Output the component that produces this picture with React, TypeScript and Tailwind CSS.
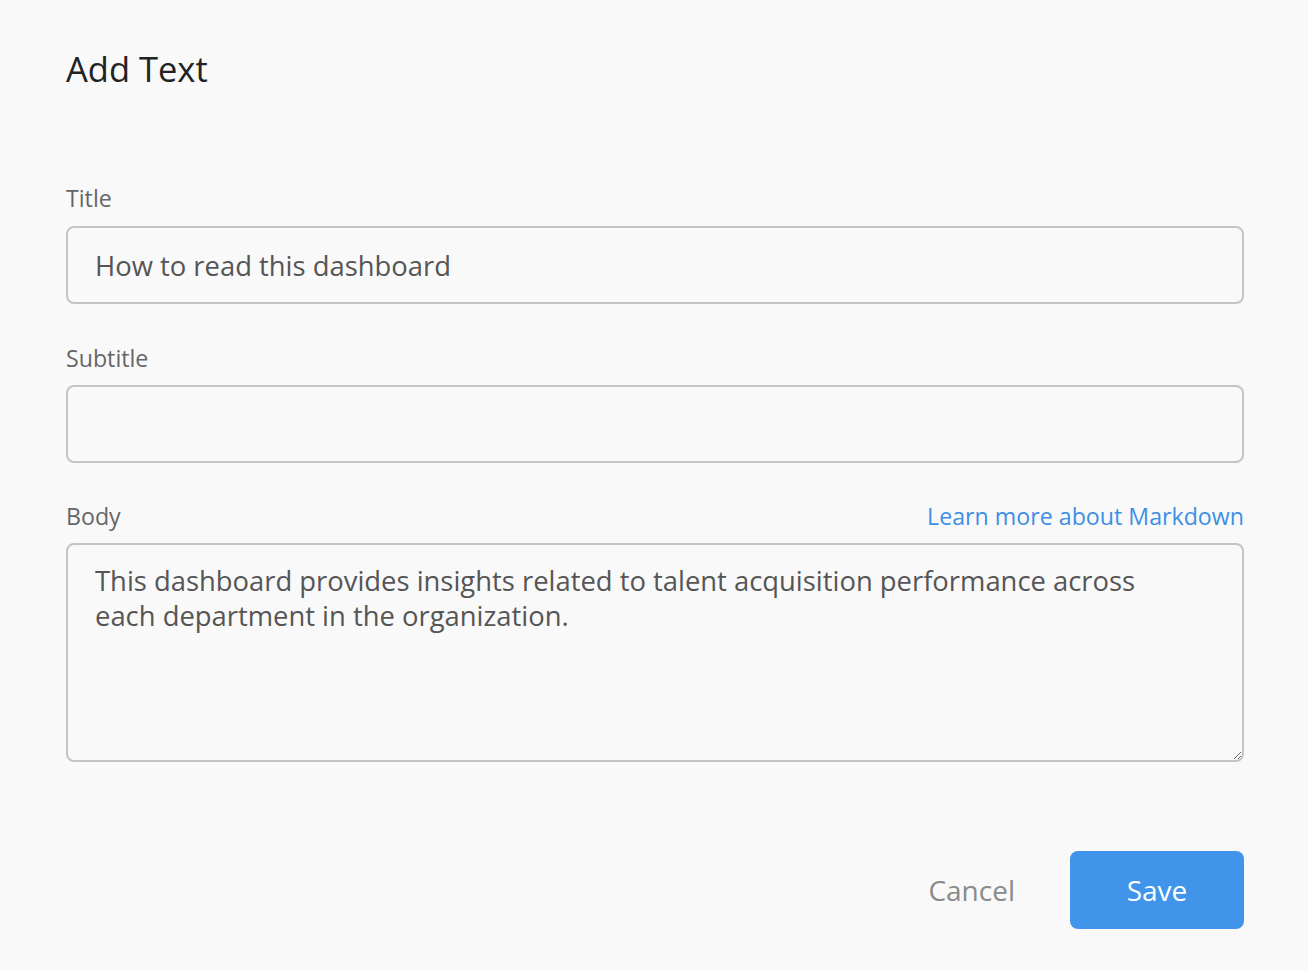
import { useState } from 'react';

const font = { fontFamily: '"Open Sans", "Noto Sans", sans-serif' };

export default function App() {
  const [title, setTitle] = useState('How to read this dashboard');
  const [subtitle, setSubtitle] = useState('');
  const [body, setBody] = useState(
    'This dashboard provides insights related to talent acquisition performance across each department in the organization.'
  );

  return (
    <div className="min-h-[970px] w-full bg-[#f9f9f9] pl-[66px] pr-[64px] pt-[42px]" style={font}>
      <h1 className="text-[34.5px] leading-[54px] text-[#222]">Add Text</h1>

      <div className="mt-[86px] flex flex-col">
        <label className="text-[23.2px] leading-[32px] text-[#666]">Title</label>
        <input
          value={title}
          onChange={e => setTitle(e.target.value)}
          className="mt-[12px] h-[78px] w-full rounded-[8px] border-2 border-[#c4c4c4] bg-[#f9f9f9] px-[27px] text-[27.4px] text-[#555] outline-none"
        />

        <label className="mt-[38px] text-[23.2px] leading-[32px] text-[#666]">Subtitle</label>
        <input
          value={subtitle}
          onChange={e => setSubtitle(e.target.value)}
          className="mt-[11px] h-[78px] w-full rounded-[8px] border-2 border-[#c4c4c4] bg-[#f9f9f9] px-[27px] text-[27.4px] text-[#555] outline-none"
        />

        <div className="mt-[37px] flex items-center justify-between">
          <label className="text-[23.2px] leading-[32px] text-[#666]">Body</label>
          <a href="#" className="text-[23.2px] leading-[32px] text-[#3d8fe6]">
            Learn more about Markdown
          </a>
        </div>
        <textarea
          value={body}
          onChange={e => setBody(e.target.value)}
          className="mt-[11px] h-[219px] w-full rounded-[8px] border-2 border-[#c4c4c4] bg-[#f9f9f9] pl-[27px] pr-[70px] pt-[18px] pb-[17px] text-[27.4px] leading-[35px] text-[#555] outline-none"
        />
      </div>

      <div className="mt-[89px] flex items-center justify-end gap-[55px]">
        <button className="text-[28px] text-[#8a8a8a]">Cancel</button>
        <button className="h-[78px] w-[174px] rounded-[8px] bg-[#4094ea] text-[28px] text-white">
          Save
        </button>
      </div>
    </div>
  );
}
